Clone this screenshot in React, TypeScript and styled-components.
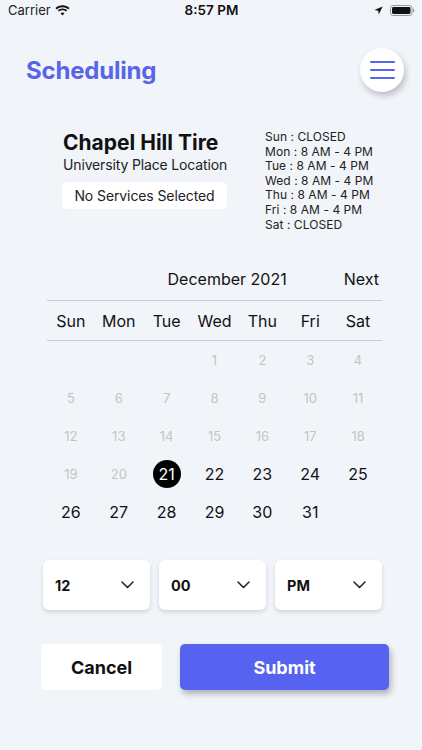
import React from "react";
import styled, { createGlobalStyle } from "styled-components";

const ACCENT = "#5865e8";

const GlobalStyle = createGlobalStyle`
  html, body { margin: 0; padding: 0; background: #f1f4f9; }
  body { font-family: Inter, "Noto Sans", "Liberation Sans", sans-serif; color: #111; }
  * { box-sizing: border-box; }
`;

const Page = styled.div`
  width: 422px;
  min-height: 750px;
  background: #f1f4f9;
  display: flex;
  flex-direction: column;
`;

const StatusBar = styled.div`
  height: 20px;
  display: grid;
  grid-template-columns: 1fr auto 1fr;
  align-items: center;
  padding: 0 7px 0 8px;
  font-size: 13px;
`;

const StatusLeft = styled.div`
  display: flex;
  align-items: center;
  gap: 4px;
  color: #222;
`;

const StatusTime = styled.div`
  font-weight: 600;
  font-size: 13.5px;
`;

const StatusRight = styled.div`
  display: flex;
  justify-content: flex-end;
  align-items: center;
  gap: 7px;
`;

const Header = styled.header`
  margin-top: 28px;
  height: 44px;
  display: flex;
  align-items: center;
  justify-content: space-between;
  padding: 0 18px 0 26px;
`;

const Title = styled.h1`
  margin: 0;
  font-size: 24px;
  font-weight: 700;
  color: ${ACCENT};
  letter-spacing: -0.2px;
`;

const MenuButton = styled.button`
  width: 44px;
  height: 44px;
  border-radius: 50%;
  border: none;
  background: #fff;
  box-shadow: 2px 4px 6px rgba(0, 0, 0, 0.22);
  display: flex;
  flex-direction: column;
  align-items: center;
  justify-content: center;
  gap: 6px;
  padding: 0;
`;

const MenuLine = styled.span`
  display: block;
  width: 25px;
  height: 2px;
  border-radius: 1px;
  background: ${ACCENT};
`;

const ShopSection = styled.section`
  margin-top: 38px;
  display: flex;
  align-items: flex-start;
  padding-left: 62px;
`;

const ShopInfo = styled.div`
  flex: 0 0 203px;
  display: flex;
  flex-direction: column;
  align-items: flex-start;
`;

const ShopName = styled.div`
  font-size: 21px;
  line-height: 26px;
  font-weight: 700;
  padding-left: 1px;
`;

const ShopLocation = styled.div`
  font-size: 14px;
  line-height: 18px;
  letter-spacing: -0.15px;
  color: #222;
  padding-left: 1px;
`;

const ServicesBox = styled.div`
  margin-top: 8px;
  height: 27px;
  width: 165px;
  background: #fff;
  border-radius: 5px;
  display: flex;
  align-items: center;
  justify-content: center;
  font-size: 14px;
  letter-spacing: -0.1px;
  color: #222;
`;

const Hours = styled.ul`
  list-style: none;
  margin: 0;
  padding: 0;
  font-size: 12px;
  line-height: 14.6px;
  letter-spacing: 0.05px;
  color: #222;
`;

const Calendar = styled.section`
  margin: 26px 0 0 47px;
  width: 335px;
`;

const MonthBar = styled.div`
  height: 43px;
  display: flex;
  align-items: center;
  justify-content: flex-end;
  gap: 57px;
  padding-right: 3px;
  border-bottom: 1px solid #c9cacf;
  font-size: 16px;
`;

const NextButton = styled.span`
  font-size: 16px;
`;

const WeekRow = styled.div`
  height: 40px;
  display: grid;
  grid-template-columns: repeat(7, 1fr);
  align-items: center;
  border-bottom: 1px solid #c9cacf;
  font-size: 16px;
  text-align: center;
`;

const DaysGrid = styled.div`
  display: grid;
  grid-template-columns: repeat(7, 1fr);
  grid-auto-rows: 38px;
`;

const DayCell = styled.div<{ $state: "off" | "on" | "sel" | "empty" }>`
  display: flex;
  align-items: center;
  justify-content: center;
  font-size: ${(p) => (p.$state === "off" ? "13px" : "16px")};
  color: ${(p) => (p.$state === "off" ? "#c3c4c8" : p.$state === "sel" ? "#fff" : "#111")};
`;

const Selected = styled.span`
  width: 28px;
  height: 28px;
  border-radius: 50%;
  background: #000;
  color: #fff;
  display: flex;
  align-items: center;
  justify-content: center;
`;

const PickerRow = styled.div`
  margin: 29px 0 0 43px;
  display: flex;
  gap: 9px;
`;

const Picker = styled.div`
  width: 107px;
  height: 50px;
  background: #fff;
  border-radius: 6px;
  box-shadow: 0 2px 4px rgba(0, 0, 0, 0.14);
  display: flex;
  align-items: center;
  justify-content: space-between;
  padding: 0 16px 0 12px;
  font-size: 14.5px;
  font-weight: 700;
`;

const ButtonRow = styled.div`
  margin: 34px 0 0 41px;
  display: flex;
  gap: 18px;
`;

const ActionButton = styled.button<{ $primary?: boolean }>`
  height: 46px;
  width: ${(p) => (p.$primary ? "209px" : "121px")};
  border: none;
  border-radius: 5px;
  background: ${(p) => (p.$primary ? "#5663f0" : "#fff")};
  color: ${(p) => (p.$primary ? "#fff" : "#111")};
  box-shadow: ${(p) => (p.$primary ? "2px 4px 6px rgba(0,0,0,0.28)" : "none")};
  font-family: inherit;
  font-size: 18px;
  font-weight: 700;
`;

const Wifi = () => (
  <svg width="15" height="11" viewBox="0 0 15 11">
    <path d="M7.5 2.2c2.2 0 4.2.8 5.7 2.2l1.3-1.4C12.7 1.3 10.2.3 7.5.3S2.3 1.3.5 3l1.3 1.4c1.5-1.4 3.5-2.2 5.7-2.2z" fill="#111" />
    <path d="M7.5 5.3c1.3 0 2.5.5 3.4 1.3l1.3-1.4C11 4.1 9.3 3.4 7.5 3.4S4 4.1 2.8 5.2l1.3 1.4c.9-.8 2.1-1.3 3.4-1.3z" fill="#111" />
    <path d="M7.5 7.4c-.8 0-1.5.3-2 .8l2 2.3 2-2.3c-.5-.5-1.2-.8-2-.8z" fill="#111" />
  </svg>
);

const LocArrow = () => (
  <svg width="9" height="9" viewBox="0 0 9 9">
    <path d="M8.6.4L.4 4.1l3.8.6.6 3.9z" fill="#111" />
  </svg>
);

const Battery = () => (
  <svg width="25" height="11" viewBox="0 0 25 11">
    <rect x="0.5" y="0.5" width="21.5" height="10" rx="2.6" fill="none" stroke="#999" />
    <rect x="2" y="2" width="18.5" height="7" rx="1.4" fill="#111" />
    <path d="M23 3.6v3.8c.8-.3 1.3-1 1.3-1.9s-.5-1.6-1.3-1.9z" fill="#999" />
  </svg>
);

const Chevron = () => (
  <svg width="13" height="8" viewBox="0 0 13 8">
    <path d="M1 1l5.5 5.5L12 1" fill="none" stroke="#222" strokeWidth="1.5" strokeLinecap="round" strokeLinejoin="round" />
  </svg>
);

const hours = [
  "Sun : CLOSED",
  "Mon : 8 AM - 4 PM",
  "Tue : 8 AM - 4 PM",
  "Wed : 8 AM - 4 PM",
  "Thu : 8 AM - 4 PM",
  "Fri : 8 AM - 4 PM",
  "Sat : CLOSED",
];

const weekdays = ["Sun", "Mon", "Tue", "Wed", "Thu", "Fri", "Sat"];

export default function App() {
  const cells: { n: number | null; state: "off" | "on" | "sel" | "empty" }[] = [];
  for (let i = 0; i < 3; i++) cells.push({ n: null, state: "empty" });
  for (let d = 1; d <= 31; d++) {
    cells.push({ n: d, state: d < 21 ? "off" : d === 21 ? "sel" : "on" });
  }
  return (
    <Page>
      <GlobalStyle />
      <StatusBar>
        <StatusLeft>
          <span>Carrier</span>
          <Wifi />
        </StatusLeft>
        <StatusTime>8:57 PM</StatusTime>
        <StatusRight>
          <LocArrow />
          <Battery />
        </StatusRight>
      </StatusBar>
      <Header>
        <Title>Scheduling</Title>
        <MenuButton aria-label="menu">
          <MenuLine />
          <MenuLine />
          <MenuLine />
        </MenuButton>
      </Header>
      <ShopSection>
        <ShopInfo>
          <ShopName>Chapel Hill Tire</ShopName>
          <ShopLocation>University Place Location</ShopLocation>
          <ServicesBox>No Services Selected</ServicesBox>
        </ShopInfo>
        <Hours>
          {hours.map((h) => (
            <li key={h}>{h}</li>
          ))}
        </Hours>
      </ShopSection>
      <Calendar>
        <MonthBar>
          <span>December 2021</span>
          <NextButton>Next</NextButton>
        </MonthBar>
        <WeekRow>
          {weekdays.map((w) => (
            <span key={w}>{w}</span>
          ))}
        </WeekRow>
        <DaysGrid>
          {cells.map((c, i) => (
            <DayCell key={i} $state={c.state}>
              {c.state === "sel" ? <Selected>{c.n}</Selected> : c.n}
            </DayCell>
          ))}
        </DaysGrid>
      </Calendar>
      <PickerRow>
        {["12", "00", "PM"].map((v) => (
          <Picker key={v}>
            <span>{v}</span>
            <Chevron />
          </Picker>
        ))}
      </PickerRow>
      <ButtonRow>
        <ActionButton>Cancel</ActionButton>
        <ActionButton $primary>Submit</ActionButton>
      </ButtonRow>
    </Page>
  );
}
